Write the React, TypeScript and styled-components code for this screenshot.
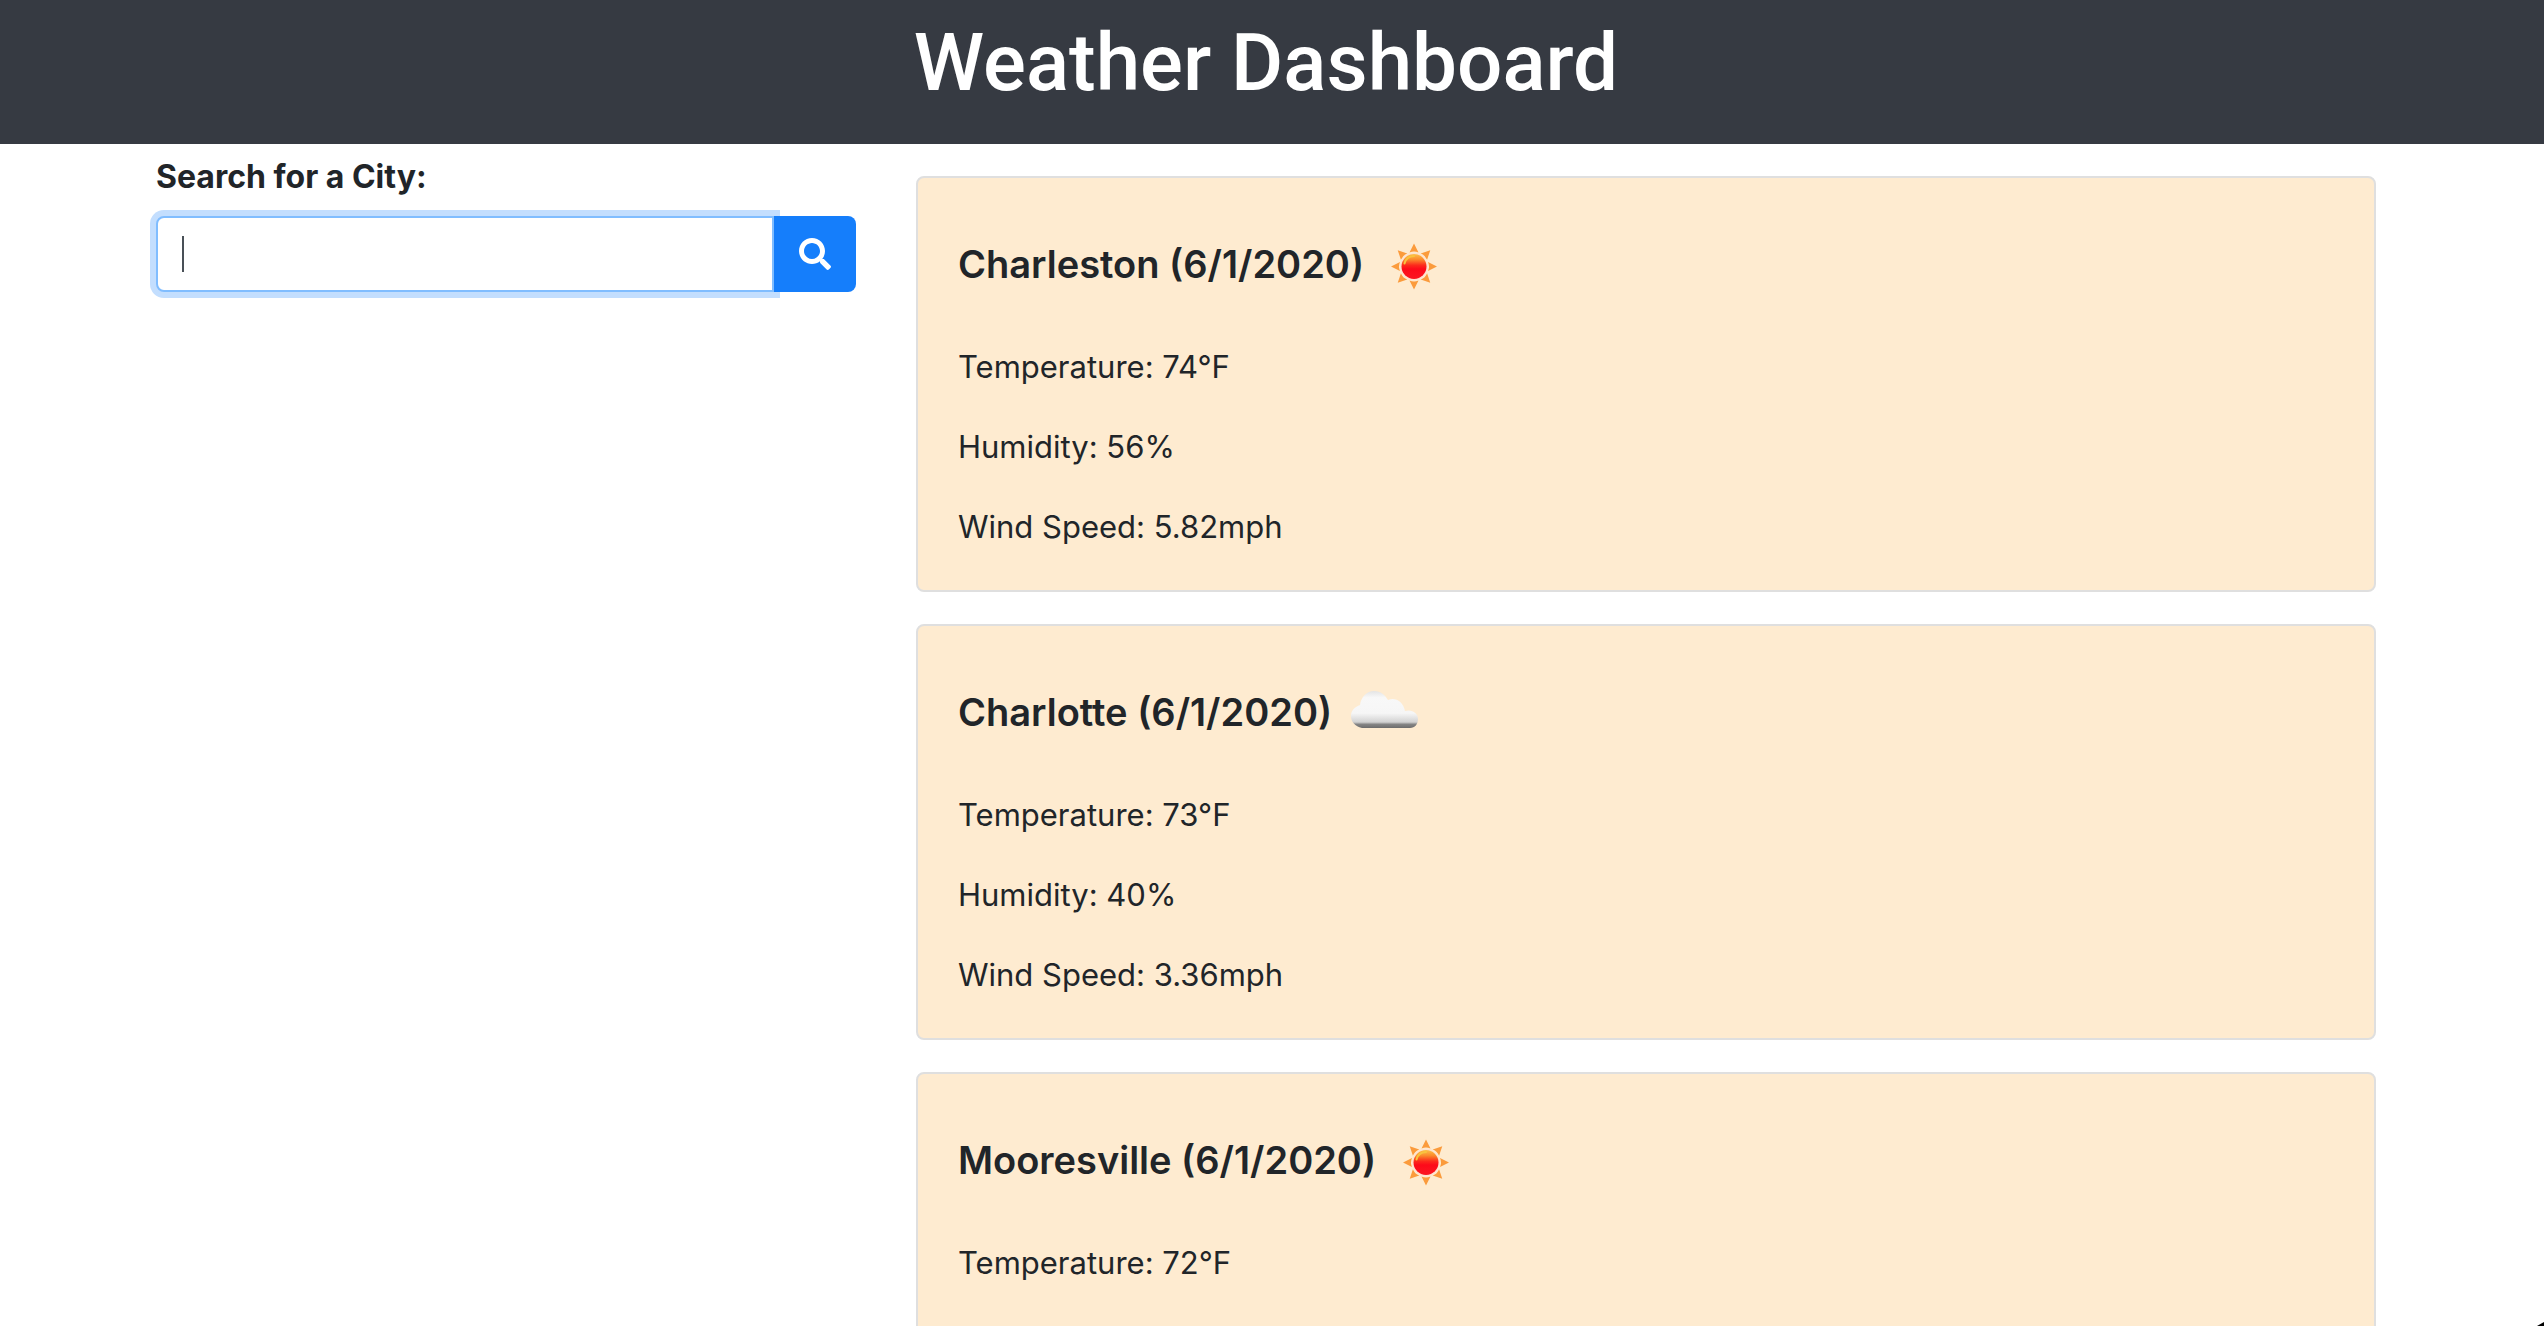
import React, { useId } from "react";
import styled, { createGlobalStyle } from "styled-components";
import { FaSearch } from "react-icons/fa";

const GlobalStyle = createGlobalStyle`
  *, *::before, *::after { box-sizing: border-box; }
  body {
    margin: 0;
    background: #fff;
    color: #212529;
    font-family: Inter, "Liberation Sans", sans-serif;
    font-size: 31px;
    line-height: 48px;
  }
`;

const Page = styled.div`
  display: flex;
  flex-direction: column;
  height: 100vh;
  overflow: hidden;

  &::after {
    content: "";
    position: fixed;
    right: 0;
    bottom: 0;
    width: 7px;
    height: 4px;
    background: #000;
    clip-path: polygon(100% 0, 100% 100%, 0 100%);
  }
`;

const Header = styled.header`
  padding: 15px 16px 33px;
  background: #363a42;
  color: #fff;
  text-align: center;
`;

const Title = styled.h1`
  margin: 0;
  padding-right: 12px;
  font-family: Roboto, "Liberation Sans", sans-serif;
  font-size: 80px;
  font-weight: 500;
  line-height: 96px;
`;

const Main = styled.main`
  display: grid;
  grid-template-columns: 1fr 2fr;
  width: 100%;
  max-width: 2292px;
  margin: 0 auto;
  padding-right: 12px;
`;

const Sidebar = styled.form`
  padding: 9px 30px 0;
`;

const Label = styled.label`
  display: block;
  margin-bottom: 15px;
  font-size: 32px;
  font-weight: 700;
`;

const InputGroup = styled.div`
  position: relative;
  display: flex;

  &::after {
    content: "";
    position: absolute;
    left: 26px;
    top: 20px;
    width: 2px;
    height: 36px;
    background: #495057;
  }
`;

const SearchInput = styled.input`
  flex: 1;
  min-width: 0;
  height: 76px;
  padding: 12px 24px;
  border: 2px solid #80bdff;
  border-radius: 8px 0 0 8px;
  outline: none;
  background: #fff;
  box-shadow: 0 0 0 6px #c3defe;
  color: #495057;
  caret-color: transparent;
  font: inherit;
`;

const SearchButton = styled.button`
  position: relative;
  display: flex;
  align-items: center;
  justify-content: center;
  width: 82px;
  padding: 0;
  border: 0;
  border-radius: 0 8px 8px 0;
  background: #157efb;
  color: #fff;
  font-size: 32px;
`;

const Results = styled.section`
  padding: 0 30px;
`;

const Card = styled.article`
  min-height: 416px;
  margin-top: 32px;
  padding: 40px 40px 39px;
  border: 2px solid #dfdfdf;
  border-radius: 8px;
  background: #feebd0;
`;

const CardTitle = styled.h5`
  margin: 0 0 25px;
  font-size: 38px;
  font-weight: 600;
  line-height: 48px;
`;

const WeatherIcon = styled.svg`
  width: 100px;
  height: 100px;
  vertical-align: middle;
`;

const Reading = styled.p`
  margin: 0 0 32px;

  &:last-child {
    margin-bottom: 0;
  }
`;

function SunIcon() {
  const gradient = useId();
  return (
    <WeatherIcon viewBox="0 0 100 100" role="img" aria-label="clear sky">
      <defs>
        <linearGradient id={gradient} x1="0" y1="0" x2="0" y2="1">
          <stop offset="0" stopColor="#fdc04a" />
          <stop offset="0.22" stopColor="#fb8a2c" />
          <stop offset="0.45" stopColor="#fc2a1c" />
          <stop offset="0.6" stopColor="#fd0a1a" />
          <stop offset="1" stopColor="#fb1620" />
        </linearGradient>
      </defs>
      <g fill="#fb9b3c">
        {[0, 45, 90, 135, 180, 225, 270, 315].map((angle) => (
          <path key={angle} d="M50 25.5 L54.5 34.5 Q50 32.5 45.5 34.5 Z" transform={`rotate(${angle} 50 48.5)`} />
        ))}
      </g>
      <circle cx="50" cy="48.5" r="14" fill="#fee3cf" />
      <circle cx="50" cy="48.5" r="12.5" fill={`url(#${gradient})`} />
      <path d="M40.5 45.5 Q42 38.5 50 38" fill="none" stroke="#f8c33e" strokeWidth="2" strokeLinecap="round" />
    </WeatherIcon>
  );
}

function CloudIcon() {
  const gradient = useId();
  return (
    <WeatherIcon viewBox="0 0 100 100" role="img" aria-label="cloudy">
      <defs>
        <linearGradient id={gradient} x1="0" y1="0" x2="0" y2="1">
          <stop offset="0" stopColor="#e4e4e4" />
          <stop offset="0.18" stopColor="#f8f8f8" />
          <stop offset="0.6" stopColor="#f6f6f6" />
          <stop offset="0.84" stopColor="#d2d2d2" />
          <stop offset="0.9" stopColor="#858585" />
          <stop offset="1" stopColor="#6c6c6c" />
        </linearGradient>
      </defs>
      <path
        d="M30 62 C23 60 19 56 19 50 C19 44 23 41 28 39 C29 31 35 25 42 25 C49 25 53 29 56 34 C63 31 71 35 73 45 C80 43 86 47 86 53 C86 58 83 62 78 62 Z"
        fill={`url(#${gradient})`}
      />
    </WeatherIcon>
  );
}

type City = { name: string; sky: "sun" | "cloud"; readings: string[] };

const cities: City[] = [
  { name: "Charleston", sky: "sun", readings: ["Temperature: 74°F", "Humidity: 56%", "Wind Speed: 5.82mph"] },
  { name: "Charlotte", sky: "cloud", readings: ["Temperature: 73°F", "Humidity: 40%", "Wind Speed: 3.36mph"] },
  { name: "Mooresville", sky: "sun", readings: ["Temperature: 72°F"] },
];

export default function App() {
  return (
    <Page>
      <GlobalStyle />
      <Header>
        <Title>Weather Dashboard</Title>
      </Header>
      <Main>
        <Sidebar onSubmit={(event) => event.preventDefault()}>
          <Label htmlFor="city">Search for a City:</Label>
          <InputGroup>
            <SearchInput id="city" type="text" />
            <SearchButton type="submit" aria-label="Search">
              <FaSearch />
            </SearchButton>
          </InputGroup>
        </Sidebar>
        <Results>
          {cities.map((city) => (
            <Card key={city.name}>
              <CardTitle>
                {city.name} (6/1/2020)
                {city.sky === "sun" ? <SunIcon /> : <CloudIcon />}
              </CardTitle>
              {city.readings.map((reading) => (
                <Reading key={reading}>{reading}</Reading>
              ))}
            </Card>
          ))}
        </Results>
      </Main>
    </Page>
  );
}
